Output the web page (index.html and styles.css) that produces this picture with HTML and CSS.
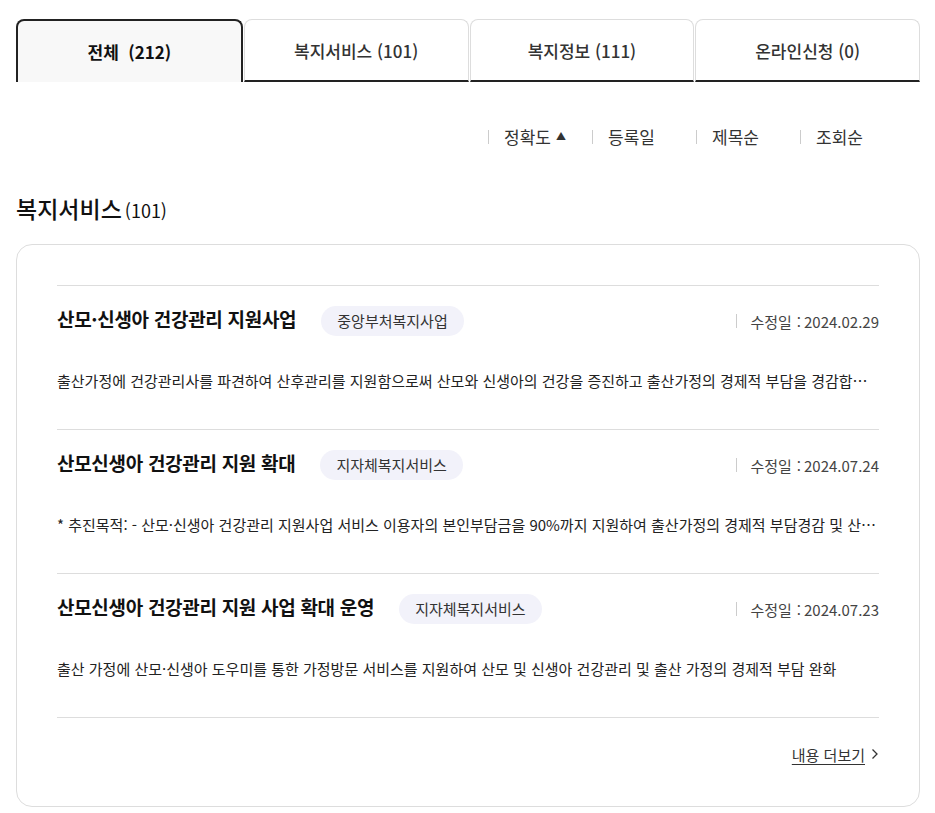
FILE: index.html
```html
<!DOCTYPE html>
<html lang="ko">
<head>
  <meta charset="UTF-8">
  <meta name="viewport" content="width=device-width, initial-scale=1.0">
  <title>복지서비스 검색결과</title>
  <link rel="stylesheet" href="styles.css">
</head>
<body>
  <div class="wrap">
    <ul class="tabs">
      <li class="tab active">전체 &nbsp;(212)</li>
      <li class="tab">복지서비스 (101)</li>
      <li class="tab">복지정보 (111)</li>
      <li class="tab">온라인신청 (0)</li>
    </ul>

    <ul class="sort">
      <li class="sort-item on">정확도 <span class="arrow">&#9650;</span></li>
      <li class="sort-item">등록일</li>
      <li class="sort-item">제목순</li>
      <li class="sort-item">조회순</li>
    </ul>

    <h2 class="section-title">복지서비스<span class="count">(101)</span></h2>

    <div class="card">
      <ul class="result-list">
        <li class="result">
          <div class="result-head">
            <strong class="result-title">산모·신생아 건강관리 지원사업</strong>
            <span class="badge">중앙부처복지사업</span>
            <span class="date">수정일 <em>:</em> 2024.02.29</span>
          </div>
          <p class="result-desc">출산가정에 건강관리사를 파견하여 산후관리를 지원함으로써 산모와 신생아의 건강을 증진하고 출산가정의 경제적 부담을 경감합니다.</p>
        </li>
        <li class="result">
          <div class="result-head">
            <strong class="result-title">산모신생아 건강관리 지원 확대</strong>
            <span class="badge">지자체복지서비스</span>
            <span class="date">수정일 <em>:</em> 2024.07.24</span>
          </div>
          <p class="result-desc">* 추진목적: - 산모·신생아 건강관리 지원사업 서비스 이용자의 본인부담금을 90%까지 지원하여 출산가정의 경제적 부담경감 및 산모와 신생아의 건강증진</p>
        </li>
        <li class="result">
          <div class="result-head">
            <strong class="result-title">산모신생아 건강관리 지원 사업 확대 운영</strong>
            <span class="badge">지자체복지서비스</span>
            <span class="date">수정일 <em>:</em> 2024.07.23</span>
          </div>
          <p class="result-desc">출산 가정에 산모·신생아 도우미를 통한 가정방문 서비스를 지원하여 산모 및 신생아 건강관리 및 출산 가정의 경제적 부담 완화</p>
        </li>
      </ul>
      <div class="more">
        <a href="#" class="more-link">내용 더보기</a>
        <svg class="more-icon" width="8" height="12" viewBox="0 0 8 12"><path d="M1.5 1.5 L6 6 L1.5 10.5" fill="none" stroke="#333" stroke-width="1.3"/></svg>
      </div>
    </div>
  </div>
</body>
</html>
```

FILE: styles.css
```css
* {
  margin: 0;
  padding: 0;
  box-sizing: border-box;
}

:root {
  --text: #222;
  --text-sub: #444;
  --line: #ddd;
  --dark: #222;
  --badge-bg: #f2f2fa;
}

body {
  font-family: 'Noto Sans CJK KR', 'Noto Sans', sans-serif;
  color: var(--text);
  background: #fff;
}

ul {
  list-style: none;
}

.wrap {
  padding: 19px 15px 0 16px;
}

/* tabs */
.tabs {
  display: flex;
}

.tab {
  flex: 1;
  height: 63px;
  display: flex;
  align-items: center;
  justify-content: center;
  font-size: 17px;
  font-weight: 500;
  color: #333;
  border: 1px solid var(--line);
  border-bottom: 2px solid var(--dark);
  border-radius: 8px 8px 0 0;
  margin-left: 1px;
}

.tab:first-child {
  margin-left: 0;
}

.tab.active {
  border: 2px solid var(--dark);
  border-bottom: none;
  background: #f8f8f8;
  font-weight: 700;
  color: #111;
}

/* sort */
.sort {
  display: flex;
  justify-content: flex-end;
  margin-top: 43px;
  padding-right: 57px;
}

.sort-item {
  display: flex;
  align-items: center;
  width: 104px;
  font-size: 17px;
  line-height: 24px;
  color: #333;
}

.sort-item:last-child {
  width: auto;
}

.sort-item::before {
  content: "";
  width: 1px;
  height: 14px;
  background: #ccc;
  margin-right: 15px;
}

.arrow {
  font-size: 10px;
  margin-left: 5px;
  position: relative;
  top: -1px;
}

/* section */
.section-title {
  margin-top: 44px;
  font-size: 23px;
  font-weight: 500;
  line-height: 30px;
  color: #111;
}

.count {
  font-size: 18px;
  font-weight: 400;
  margin-left: 3px;
}

.card {
  margin-top: 19px;
  border: 1px solid var(--line);
  border-radius: 16px;
  padding: 40px;
}

.result {
  border-top: 1px solid var(--line);
  padding: 20px 0 36px;
}

.result:last-child {
  border-bottom: 1px solid var(--line);
}

.result-head {
  display: flex;
  align-items: center;
  height: 30px;
}

.result-title {
  font-size: 19px;
  font-weight: 700;
  color: #111;
  letter-spacing: -0.3px;
  position: relative;
  top: -3px;
}

.badge {
  margin-left: 25px;
  height: 30px;
  line-height: 30px;
  padding: 0 16px;
  border-radius: 15px;
  background: var(--badge-bg);
  font-size: 15px;
  color: #333;
}

.date {
  margin-left: auto;
  display: flex;
  align-items: center;
  font-size: 15px;
  color: #444;
}

.date::before {
  content: "";
  width: 1px;
  height: 14px;
  background: #ccc;
  margin-right: 13px;
}

.date em {
  font-style: normal;
  margin: 0 3px 0 5px;
}

.result-desc {
  margin-top: 33px;
  font-size: 15px;
  line-height: 24px;
  white-space: nowrap;
  overflow: hidden;
  text-overflow: ellipsis;
}

.more {
  display: flex;
  justify-content: flex-end;
  align-items: center;
  margin-top: 24px;
  height: 24px;
}

.more-link {
  font-size: 15px;
  color: #333;
  text-decoration: underline;
  text-underline-offset: 3px;
}

.more-icon {
  margin-left: 6px;
}
```
